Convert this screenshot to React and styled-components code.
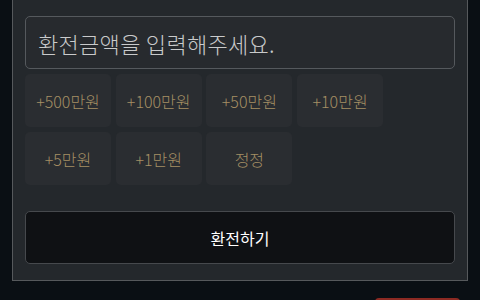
import React from "react";
import styled, { createGlobalStyle } from "styled-components";

const GlobalStyle = createGlobalStyle`
  html, body {
    margin: 0;
    padding: 0;
    background: #0a0f14;
    font-family: "Noto Sans CJK KR", "Noto Sans", sans-serif;
    overflow: hidden;
  }
`;

const Panel = styled.div`
  margin: 0 12px;
  background: #24282c;
  border: 1px solid #56595c;
  border-top: none;
  padding: 16px 12px 16px;
`;

const AmountInput = styled.input`
  display: block;
  box-sizing: border-box;
  width: 100%;
  height: 53px;
  padding: 0 12px;
  background: #272a2e;
  border: 1px solid #55595d;
  border-radius: 5px;
  color: #e0e0e0;
  font-family: inherit;
  font-size: 22px;
  font-weight: 300;
  letter-spacing: 0.3px;
  outline: none;
  &::placeholder {
    color: #c9cacb;
  }
`;

const Presets = styled.div`
  display: flex;
  flex-wrap: wrap;
  gap: 5px 4.7px;
  margin-top: 5px;
`;

const Preset = styled.button`
  width: 86px;
  height: 53px;
  background: #2a2d31;
  border: none;
  border-radius: 5px;
  color: #a58f64;
  font-family: inherit;
  font-size: 16px;
  font-weight: 300;
  padding: 0;
  cursor: pointer;
`;

const Submit = styled.button`
  display: block;
  width: 100%;
  height: 53px;
  margin-top: 26px;
  background: #0f1114;
  border: 1px solid #46494d;
  border-radius: 5px;
  color: #ffffff;
  font-family: inherit;
  font-size: 16px;
  cursor: pointer;
`;

const Footer = styled.div`
  display: flex;
  justify-content: flex-end;
  padding: 17px 20px 0 0;
`;

const RedTab = styled.div`
  width: 85px;
  height: 20px;
  background: #8c2a23;
  border-radius: 4px 4px 0 0;
`;

const amounts = ["+500만원", "+100만원", "+50만원", "+10만원", "+5만원", "+1만원", "정정"];

export default function App() {
  return (
    <>
      <GlobalStyle />
      <Panel>
        <AmountInput placeholder="환전금액을 입력해주세요." />
        <Presets>
          {amounts.map((a) => (
            <Preset key={a}>{a}</Preset>
          ))}
        </Presets>
        <Submit>환전하기</Submit>
      </Panel>
      <Footer>
        <RedTab />
      </Footer>
    </>
  );
}
